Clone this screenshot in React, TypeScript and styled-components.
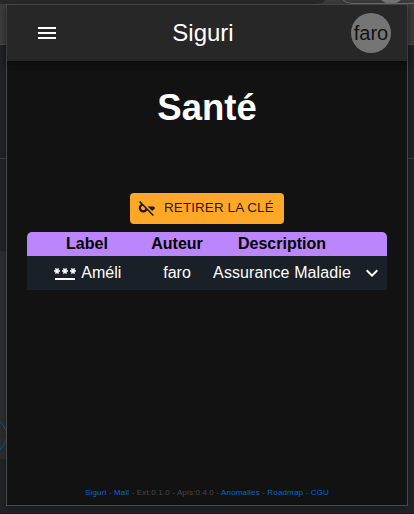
import React from 'react';
import styled, { createGlobalStyle } from 'styled-components';
import { MdMenu, MdKeyOff, MdPassword, MdExpandMore } from 'react-icons/md';

const GlobalStyle = createGlobalStyle`
  * { box-sizing: border-box; }
  body { margin: 0; background: #202124; font-family: "Liberation Sans", Arial, sans-serif; }
  svg { flex: none; }
`;

const Desktop = styled.div`
  position: relative;
  width: 414px;
  height: 514px;
  overflow: hidden;
  display: flex;
  flex-direction: column;
  background: #202226;
`;

const BrowserChrome = styled.div`
  height: 45px;
  flex: none;
  background: #3d3d3d;
  border-bottom: 1px solid #4a4a4a;
`;

const TabStrip = styled.div`
  width: 325px;
  height: 4px;
  background: #292929;
  border-bottom-right-radius: 12px 4px;
`;

const ProfilePill = styled.div`
  position: absolute;
  left: 338px;
  top: -24px;
  width: 100px;
  height: 28px;
  border: 1px solid #707070;
  border-radius: 14px;
`;

const ProfileDot = styled.div`
  position: absolute;
  left: 377px;
  top: -24px;
  width: 28px;
  height: 28px;
  border-radius: 50%;
  background: #777;
`;

const PageTop = styled.div`
  height: 114px;
  flex: none;
  border-bottom: 1px solid #3c3d40;
`;

const PageMiddle = styled.div`
  height: 92px;
  flex: none;
`;

const PagePanel = styled.div`
  height: 208px;
  width: 10px;
  flex: none;
  background: #2b2c2f;
`;

const PageRing = styled.div`
  position: absolute;
  left: -30px;
  top: 417px;
  width: 37px;
  height: 37px;
  border: 1px solid #125a88;
  border-radius: 50%;
`;

const PageBottom = styled.div`
  flex: 1;
  display: flex;
  align-items: flex-end;
`;

const BottomEdge = styled.div`
  height: 1px;
  width: 100%;
  background: #21161f;
`;

const Popup = styled.main`
  position: absolute;
  left: 6px;
  top: 4px;
  width: 402px;
  height: 502px;
  border: 1px solid #4a4a4a;
  background: #121212;
  box-shadow: 0 2px 6px rgba(0, 0, 0, 0.3);
  display: flex;
  flex-direction: column;
  align-items: center;
  color: #fff;
`;

const AppBar = styled.header`
  width: 100%;
  height: 56px;
  flex: none;
  padding: 0 16px 0 28px;
  display: grid;
  grid-template-columns: 24px 1fr 40px;
  align-items: center;
  background: #272727;
  box-shadow: 0 2px 4px -1px rgba(0, 0, 0, 0.2), 0 4px 5px rgba(0, 0, 0, 0.14),
    0 1px 10px rgba(0, 0, 0, 0.12);
`;

const MenuButton = styled.button`
  display: flex;
  padding: 0;
  border: 0;
  background: none;
  color: inherit;
`;

const AppTitle = styled.div`
  padding-right: 4px;
  font-size: 24px;
  line-height: 32px;
  text-align: center;
`;

const Avatar = styled.div`
  width: 40px;
  height: 40px;
  border-radius: 50%;
  display: flex;
  align-items: center;
  justify-content: center;
  background: #757575;
  color: #121212;
  font-size: 20px;
`;

const Heading = styled.h1`
  margin: 25px 0 0;
  font-size: 36.5px;
  line-height: 44px;
  font-weight: 700;
`;

const KeyButton = styled.button`
  margin-top: 63px;
  width: 154px;
  height: 31px;
  flex: none;
  padding: 0 10px 2px 8px;
  display: flex;
  align-items: center;
  gap: 8px;
  border: 0;
  border-radius: 4px;
  background: #ffa726;
  color: rgba(0, 0, 0, 0.87);
  font: 400 13.5px/23px "Liberation Sans", Arial, sans-serif;
  letter-spacing: 0.07px;
  white-space: nowrap;
`;

const Table = styled.div`
  margin-top: 8px;
  width: 360px;
  border-radius: 5px 5px 0 0;
  overflow: hidden;
  font-size: 16px;
`;

const Row = styled.div<{ $head?: boolean }>`
  display: grid;
  grid-template-columns: 120px 60px 150px 30px;
  align-items: center;
  justify-items: center;
  height: ${({ $head }) => ($head ? 24 : 34)}px;
  background: ${({ $head }) => ($head ? '#bb86fc' : '#1a2027')};
  color: ${({ $head }) => ($head ? '#000' : '#fff')};
  font-weight: ${({ $head }) => ($head ? 700 : 400)};
  white-space: nowrap;
`;

const Cell = styled.div<{ $wide?: boolean }>`
  display: flex;
  align-items: center;
  gap: 4.5px;
  letter-spacing: ${({ $wide }) => ($wide ? '0.1px' : 'normal')};
`;

const Footer = styled.footer`
  margin-top: auto;
  margin-bottom: 6px;
  font-size: 8px;
  letter-spacing: 0.15px;
  line-height: 12px;
  color: #484848;
  white-space: nowrap;
`;

const FooterLink = styled.a`
  color: #0b66c8;
`;

export default function App() {
  return (
    <>
      <GlobalStyle />
      <Desktop>
        <BrowserChrome>
          <TabStrip />
          <ProfilePill />
          <ProfileDot />
        </BrowserChrome>
        <PageTop />
        <PageMiddle />
        <PagePanel />
        <PageRing />
        <PageBottom>
          <BottomEdge />
        </PageBottom>
        <Popup>
          <AppBar>
            <MenuButton aria-label="Menu">
              <MdMenu size={24} />
            </MenuButton>
            <AppTitle>Siguri</AppTitle>
            <Avatar>faro</Avatar>
          </AppBar>
          <Heading>Santé</Heading>
          <KeyButton>
            <MdKeyOff size={18} />
            RETIRER LA CLÉ
          </KeyButton>
          <Table>
            <Row $head>
              <Cell>Label</Cell>
              <Cell>Auteur</Cell>
              <Cell>Description</Cell>
            </Row>
            <Row>
              <Cell>
                <MdPassword size={24} />
                Améli
              </Cell>
              <Cell>faro</Cell>
              <Cell $wide>Assurance Maladie</Cell>
              <Cell>
                <MdExpandMore size={24} />
              </Cell>
            </Row>
          </Table>
          <Footer>
            <FooterLink>Siguri</FooterLink> - <FooterLink>Mail</FooterLink> - Ext:0.1.0 - Apis:0.4.0 -{' '}
            <FooterLink>Anomalies</FooterLink> - <FooterLink>Roadmap</FooterLink> - <FooterLink>CGU</FooterLink>
          </Footer>
        </Popup>
      </Desktop>
    </>
  );
}
